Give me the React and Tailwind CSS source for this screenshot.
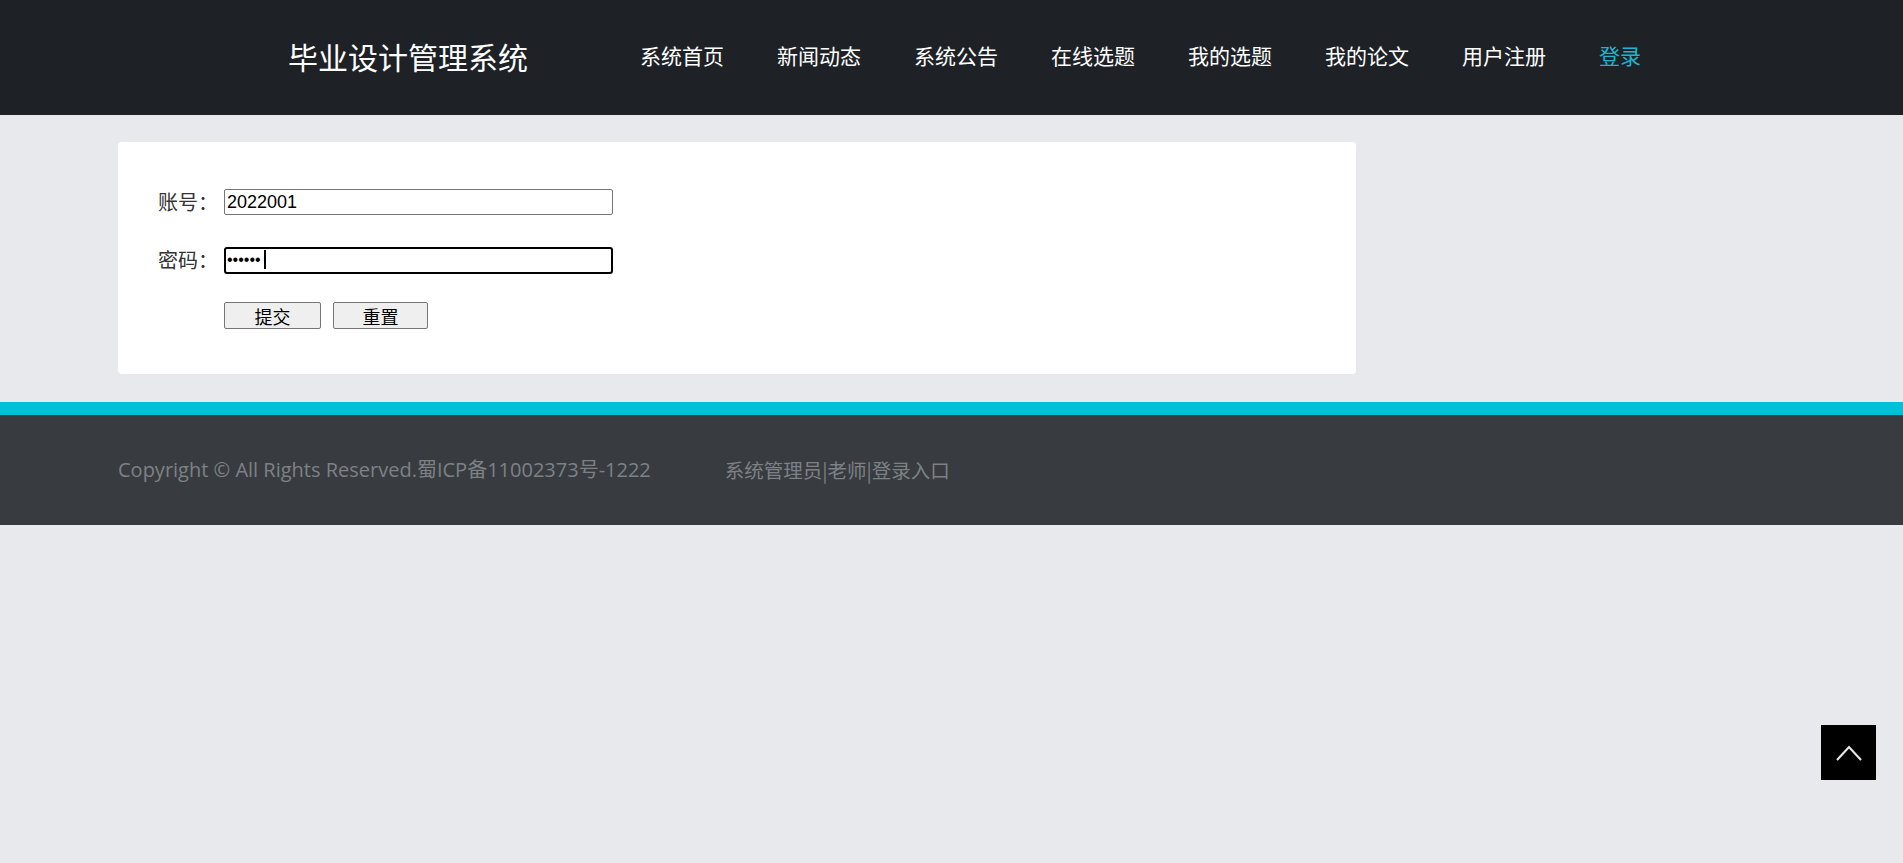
import { useState } from "react";

// --- DATOS DEL MENÚ ---
const navItems = [
  "系统首页",
  "新闻动态",
  "系统公告",
  "在线选题",
  "我的选题",
  "我的论文",
  "用户注册",
];

const cjk = "font-['Microsoft_YaHei','Noto_Sans_CJK_SC',sans-serif]";

export default function App() {
  const [account, setAccount] = useState("2022001");
  const [password, setPassword] = useState("123456");

  const handleReset = () => {
    setAccount("");
    setPassword("");
  };

  return (
    <div className={`min-h-[863px] bg-[#e8e9ed] ${cjk}`}>
      {/* CABECERA */}
      <header className="h-[115px] bg-[#1e2226] flex items-center pl-[288px] pb-[4px]">
        <h1 className="text-[30px] text-white leading-none">毕业设计管理系统</h1>
        <nav className="flex items-center gap-[53px] ml-[112px] text-[21px] leading-none">
          {navItems.map((item) => (
            <a key={item} href="#" className="text-white">
              {item}
            </a>
          ))}
          <a href="#" className="text-[#1cb6d0]">
            登录
          </a>
        </nav>
      </header>

      {/* FORMULARIO */}
      <main className="pt-[27px] pb-[28px] pl-[118px]">
        <div className="w-[1238px] h-[232px] bg-white rounded-[4px] pl-[40px] pt-[47px]">
          <div className="flex items-center h-[26px]">
            <label className="w-[66px] text-[20px] leading-none text-[#333]">账号：</label>
            <input
              type="text"
              value={account}
              onChange={(e) => setAccount(e.target.value)}
              className="w-[389px] h-[26px] border border-[#767676] rounded-[2px] px-[2px] text-[18px] text-black font-['Liberation_Sans',Arial,sans-serif] outline-none"
            />
          </div>
          <div className="flex items-center h-[26px] mt-[32px]">
            <label className="w-[66px] text-[20px] leading-none text-[#333]">密码：</label>
            <div className="relative">
              <input
                type="password"
                value={password}
                onChange={(e) => setPassword(e.target.value)}
                className="w-[389px] h-[27px] border-2 border-black rounded-[3px] px-[1px] text-[16px] text-black font-['Liberation_Sans',Arial,sans-serif] outline-none"
              />
              <span className="absolute left-[40px] top-[4px] w-[2px] h-[19px] bg-black" />
            </div>
          </div>
          <div className="flex gap-[12px] mt-[29px] ml-[66px] text-[18px] text-black leading-none">
            <button className="w-[97px] h-[27px] bg-[#efefef] border border-[#767676] rounded-[2px]">
              提交
            </button>
            <button
              onClick={handleReset}
              className="w-[95px] h-[27px] bg-[#efefef] border border-[#767676] rounded-[2px]"
            >
              重置
            </button>
          </div>
        </div>
      </main>

      {/* PIE DE PÁGINA */}
      <footer className="border-t-[13px] border-[#00bfd8] bg-[#383c41] h-[123px] flex items-center pl-[118px] text-[#7d8185]">
        <p className="text-[20px] font-['Open_Sans','Noto_Sans_CJK_SC',sans-serif]">
          Copyright © All Rights Reserved.蜀ICP备11002373号-1222
        </p>
        <p className="ml-[74px] text-[19.5px]">系统管理员|老师|登录入口</p>
      </footer>

      {/* BOTÓN VOLVER ARRIBA */}
      <a
        href="#"
        className="fixed right-[27px] bottom-[83px] w-[55px] h-[55px] bg-black flex items-center justify-center"
      >
        <svg width="28" height="20" viewBox="0 0 28 20" fill="none">
          <path d="M2 17 L14 4 L26 17" stroke="#e5e5e5" strokeWidth="2.2" />
        </svg>
      </a>
    </div>
  );
}
